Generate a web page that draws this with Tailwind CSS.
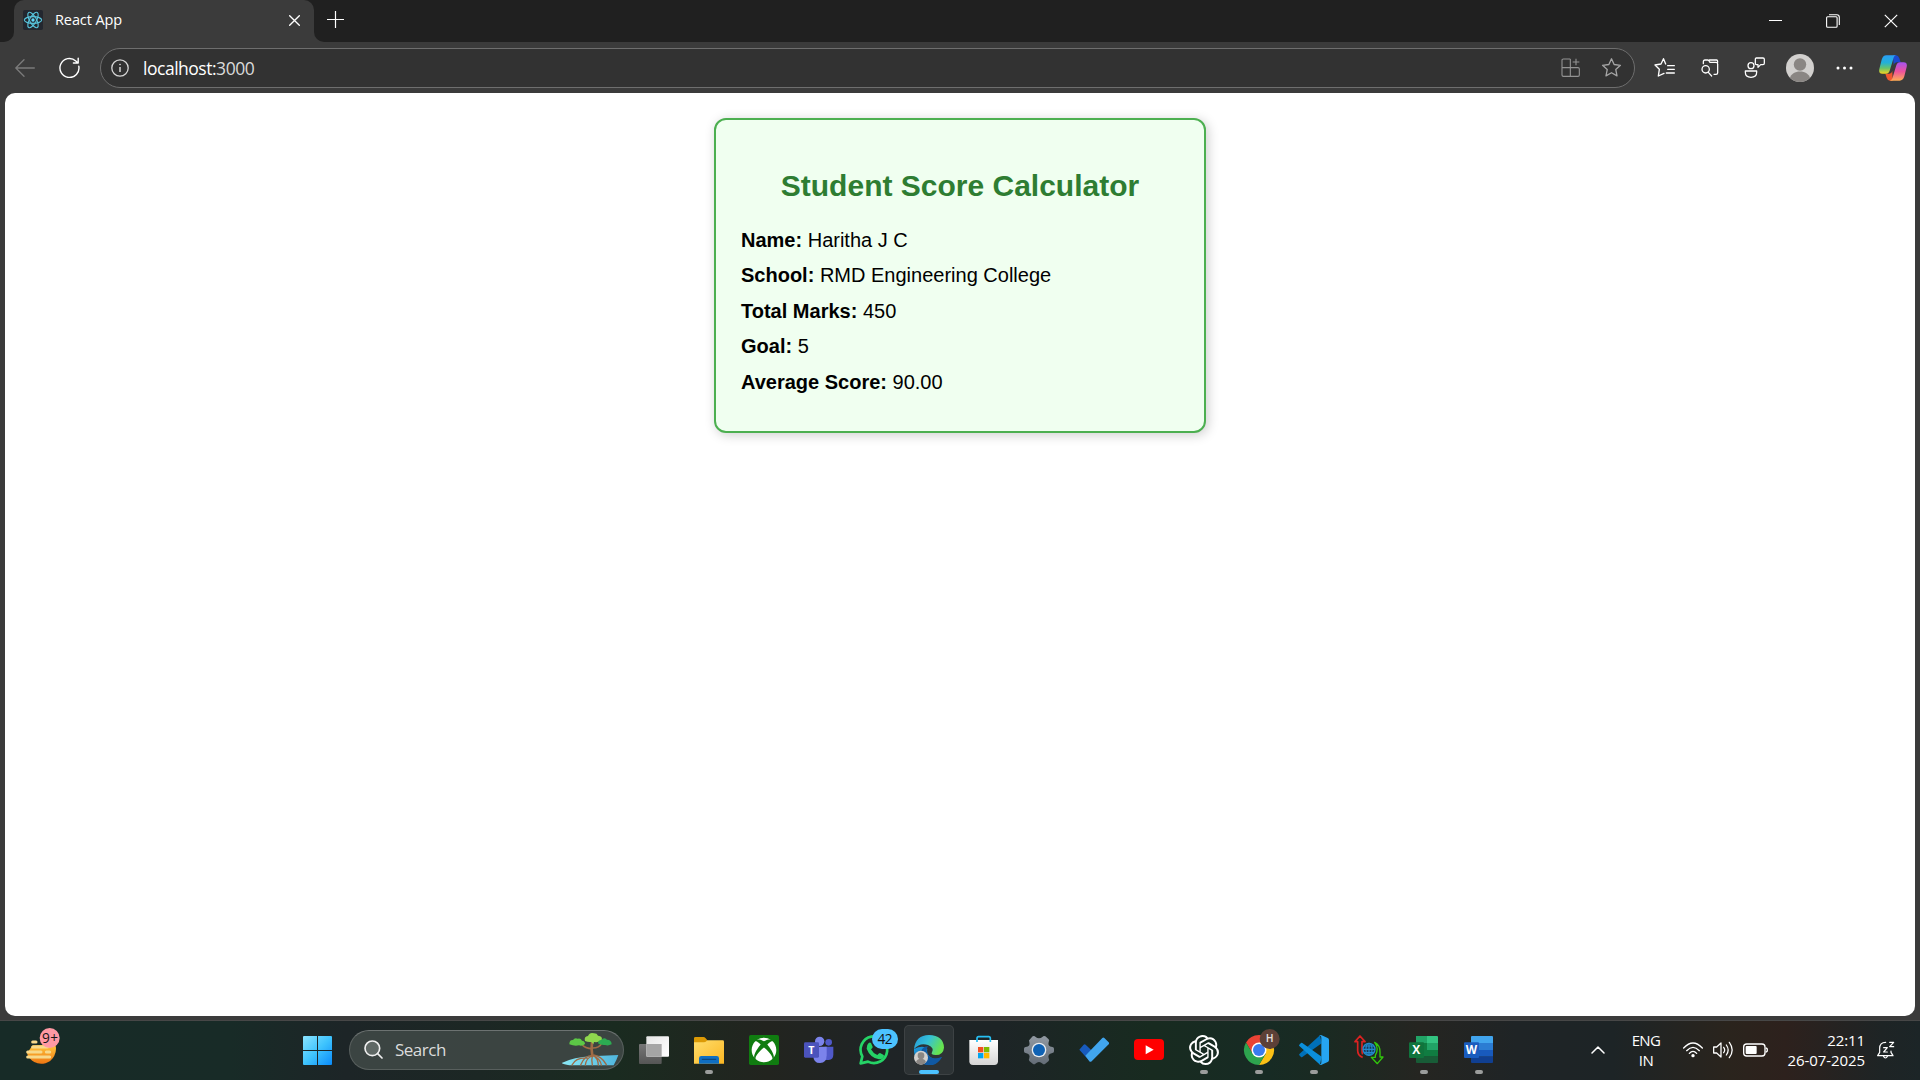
<!DOCTYPE html>
<html lang="en">
<head>
<meta charset="utf-8">
<title>React App</title>
<script src="https://cdn.jsdelivr.net/npm/@tailwindcss/browser@4"></script>
</head>
<body class="flex h-screen w-screen flex-col overflow-hidden bg-[#3b3b3b] font-['Open_Sans','Noto_Sans',sans-serif] text-white">

<!-- Tab strip -->
<header class="flex h-[42px] shrink-0 bg-[#3b3b3b]">
  <div class="w-[14px] rounded-br-[10px] bg-[#202020]"></div>
  <div class="w-[300px] bg-[#202020]">
    <div class="flex h-full items-center rounded-t-[10px] bg-[#3b3b3b] pb-[3px] pl-[9px]">
      <svg class="size-5 shrink-0" viewBox="0 0 60 60" fill="none">
        <rect width="60" height="60" rx="5" fill="#23272f"/>
        <g stroke="#58c4dc" stroke-width="3.4"><ellipse cx="30" cy="30" rx="26" ry="10"/><ellipse cx="30" cy="30" rx="26" ry="10" transform="rotate(60 30 30)"/><ellipse cx="30" cy="30" rx="26" ry="10" transform="rotate(120 30 30)"/></g>
        <circle cx="30" cy="30" r="5" fill="#61dafb"/>
      </svg>
      <span class="ml-3 w-[234px] text-[14.5px] leading-5 tracking-[-0.1px]">React App</span>
      <svg class="mt-[2px] size-[11px] shrink-0" viewBox="0 0 33 33" stroke="#fff" stroke-width="4" stroke-linecap="round"><path d="M2 2 31 31M31 2 2 31"/></svg>
    </div>
  </div>
  <div class="flex grow items-center rounded-bl-[10px] bg-[#202020]">
    <svg class="mb-[3px] ml-[13px] size-[17px]" viewBox="0 0 17 17" stroke="#fff" stroke-width="1.2"><path d="M8.5 0v17M0 8.5h17"/></svg>
    <div class="ml-auto flex h-full items-center">
      <div class="flex w-[58px] justify-center"><svg class="size-[13px]" viewBox="0 0 13 13" stroke="#fff"><path d="M0 5.5h13"/></svg></div>
      <div class="flex w-[58px] justify-center"><svg class="size-[14px]" viewBox="0 0 14 14" fill="none" stroke="#fff" stroke-width="1.1"><rect x=".6" y="2.8" width="10.5" height="10.5" rx="1"/><path d="M3 .7h7.800Q13.300.7 13.300 3.200V11"/></svg></div>
      <div class="flex w-[58px] justify-center"><svg class="size-[14px]" viewBox="0 0 14 14" stroke="#fff" stroke-width="1.2"><path d="M.8.8 13.200 13.200M13.200.8.8 13.200"/></svg></div>
    </div>
  </div>
</header>

<!-- Toolbar -->
<nav class="flex h-[51px] shrink-0 items-center pl-[2px]">
  <div class="flex w-[45px] justify-center"><svg class="h-[18px] w-5" viewBox="0 0 20 18" fill="none" stroke="#7b7b7b" stroke-width="1.3" stroke-linecap="round" stroke-linejoin="round"><path d="M19.300 9H.8M9 .8.8 9l8.200 8.200"/></svg></div>
  <div class="flex w-[45px] justify-center"><svg class="h-[21px] w-[21px]" viewBox="0 0 21 21" fill="none" stroke="#fff" stroke-width="1.4" stroke-linecap="round" stroke-linejoin="round"><path d="M19.800 9.200A9.500 9.500 0 1 1 16.800 3.900L19 6M19.200 1.200V6h-4.800"/></svg></div>
  <div class="ml-[8px] flex h-10 w-[1535px] items-center rounded-full border border-[#6e6e6e] bg-[#323232] pl-[10px]">
    <svg class="size-[18px]" viewBox="0 0 18 18" fill="none" stroke="#d6d6d6" stroke-width="1.300"><circle cx="9" cy="9" r="8.200"/><path d="M9 8v5" stroke-width="1.500"/><circle cx="9" cy="5.500" r=".5" fill="#d6d6d6" stroke-width=".8"/></svg>
    <span class="ml-[14px] text-[17.5px] leading-6 tracking-[-0.48px]">localhost:<span class="text-[#dadada]">3000</span></span>
    <svg class="ml-auto size-[19px]" viewBox="0 0 57 57" fill="none" stroke="#939393" stroke-width="3.300" stroke-linejoin="round"><path d="M28 3H7Q3 3 3 7v44q0 4 4 4h44q4 0 4-4V33q0-4-4-4H3M28 3v52M45 2v20M35 12h20"/></svg>
    <svg class="ml-[21px] mr-[12px] size-[21px]" viewBox="0 0 24 24" fill="none" stroke="#a5a5a5" stroke-width="1.500" stroke-linejoin="round"><path d="m12 2 3 6.600 7.200.9-5.300 4.900 1.400 7.100L12 18l-6.300 3.500 1.400-7.100L1.800 9.500 9 8.600z"/></svg>
  </div>
  <div class="ml-[7px] flex w-[45px] justify-center"><svg class="size-[21px]" viewBox="0 0 63 63" fill="none" stroke="#fff" stroke-width="4" stroke-linejoin="round" stroke-linecap="round"><path d="M35 21 28.500 5 21 21 3 24 16 37 13 57 30 49M41 26h20M41 37h20M37 48h24"/></svg></div>
  <div class="flex w-[45px] justify-center"><svg class="size-[18px]" viewBox="0 0 54 54" fill="none" stroke="#fff" stroke-width="3.800" stroke-linecap="round"><path d="M7 14V8q0-5 5-5h8q3 0 5 4l2 3h18q5 0 5 5v26q0 5-5 5h-6M25 3h22q3 0 3 7"/><circle cx="14" cy="31" r="11"/><path d="m22 40 10 11"/></svg></div>
  <div class="flex w-[45px] justify-center"><svg class="size-[21px]" viewBox="0 0 63 63" fill="none" stroke="#fff" stroke-width="3.800" stroke-linejoin="round"><circle cx="21" cy="26" r="9"/><path d="M4 42h34v4q0 15-17 15T4 46zM37 3h20q4 0 4 4v12q0 4-4 4H50l-8 8v-8h-5q-3 0-3-4V7q0-4 3-4z"/></svg></div>
  <div class="flex w-[45px] justify-center"><svg class="size-7 rounded-full bg-[#d2d0ce]" viewBox="0 0 28 28" fill="#8a8683"><circle cx="14" cy="10.500" r="6.200"/><path d="M4 24c1-4 5-6.500 10-6.500S23 20 24 24l-3 4H7z"/></svg></div>
  <div class="flex w-[45px] justify-center"><svg class="h-1 w-[17px]" viewBox="0 0 17 4" fill="#fff"><circle cx="2" cy="2" r="1.500"/><circle cx="8.500" cy="2" r="1.500"/><circle cx="15" cy="2" r="1.500"/></svg></div>
  <div class="flex w-[51px] justify-center"><svg class="h-[26px] w-7" viewBox="0 0 84 78">
    <defs>
      <linearGradient id="ca" x1="0" y1="0" x2="0" y2="1"><stop offset="0" stop-color="#2a9df4"/><stop offset=".4" stop-color="#22b0d8"/><stop offset=".7" stop-color="#67c36b"/><stop offset="1" stop-color="#f2d321"/></linearGradient>
      <linearGradient id="cb" x1="0" y1="0" x2="0" y2="1"><stop offset="0" stop-color="#a653f0"/><stop offset=".5" stop-color="#ee529c"/><stop offset="1" stop-color="#ffad55"/></linearGradient>
    </defs>
    <path d="M42 1h9q7 0 10 9l4 12H53q-7 0-9 8z" fill="#1b49cf"/>
    <path d="M41 77h-8q-7 0-10-9l-4-12h12q7 0 9-8z" fill="#f0572f"/>
    <path d="M22 1h30q-6 0-9 10L32 47q-3 9-11 9H10Q-2 56 1 42L8 14Q12 1 22 1z" fill="url(#ca)"/>
    <path d="M62 77H32q6 0 9-10l11-36q3-9 11-9h11q12 0 9 14l-7 28q-4 13-14 13z" fill="url(#cb)"/>
  </svg></div>
</nav>

<!-- Web page -->
<main class="mx-[5px] h-[923px] shrink-0 rounded-[10px] bg-white pt-[25px] font-['Liberation_Sans',Arial,sans-serif] text-black">
  <section class="mx-auto h-[315px] w-[492px] rounded-[12px] border-2 border-[#4caf50] bg-[#f0fff0] p-[25px] shadow-[2px_2px_12px_rgba(0,0,0,0.2)]">
    <h2 class="mt-[24px] mb-[26px] text-center text-[30px] leading-[34px] font-bold text-[#2e7d32]">Student Score Calculator</h2>
    <div class="flex flex-col gap-[12.4px] text-[20px] leading-[23px]">
      <p><strong>Name:</strong> Haritha J C</p>
      <p><strong>School:</strong> RMD Engineering College</p>
      <p><strong>Total Marks:</strong> 450</p>
      <p><strong>Goal:</strong> 5</p>
      <p><strong>Average Score:</strong> 90.00</p>
    </div>
  </section>
</main>

<!-- Taskbar -->
<footer class="mt-[4px] flex h-[60px] shrink-0 items-center border-t border-[#474747] bg-[linear-gradient(90deg,#172b27_0%,#182b27_12%,#1d2527_18%,#1c2724_25%,#1a2b20_32%,#22241f_40%,#1f2426_46%,#1d2426_52%,#182b20_60%,#172b24_66%,#1a2a22_69%,#252521_74%,#1f2426_79%,#1d2426_84%,#2a241d_90%,#2d211d_93%,#1e2425_98%,#1c2527_100%)] pb-[2px]">
  <div class="flex w-[290px] pb-[7px] pl-[26px]">
    <svg class="h-9 w-[34px]" viewBox="0 0 102 108">
      <defs><linearGradient id="sun" x1="0" y1="0" x2="0" y2="1"><stop offset="0" stop-color="#ffc83d"/><stop offset="1" stop-color="#ee7612"/></linearGradient></defs>
      <path d="M3 76A43 43 0 0 0 88 50L20 52z" fill="url(#sun)"/>
      <g stroke="#f7d98b" stroke-width="9" stroke-linecap="round"><path d="M20 42h10M20 57h44M5 72h40M61 72h10M5 87h66" /></g>
      <circle cx="71" cy="30" r="30" fill="#ff99a4"/>
      <text x="72" y="45" text-anchor="middle" font-family="Open Sans" font-size="41" fill="#151515" textLength="48">9+</text>
    </svg>
  </div>
  <div class="flex w-[55px] justify-center pt-px">
    <svg class="size-[29px]" viewBox="0 0 87 87"><defs><linearGradient id="win" gradientUnits="userSpaceOnUse" x1="0" y1="0" x2="87" y2="87"><stop stop-color="#8be4ff"/><stop offset=".5" stop-color="#3fc4fd"/><stop offset="1" stop-color="#0a8bfa"/></linearGradient></defs><path fill="url(#win)" d="M3 0h39v42H0V3q0-3 3-3zM45 0h39q3 0 3 3v39H45zM0 45h42v42H3q-3 0-3-3zM45 45h42v39q0 3-3 3H45z"/></svg>
  </div>
  <div class="ml-1 mr-[2.5px] flex h-10 w-[275px] items-center rounded-full border border-white/15 border-t-white/25 bg-[#3d4643]/95 pl-[14px]">
    <svg class="size-[19px]" viewBox="0 0 57 57" fill="none" stroke="#f0f0f0" stroke-width="5" stroke-linecap="round"><circle cx="25" cy="25" r="22" fill="#5f6865"/><path d="m41 41 13 13"/></svg>
    <span class="ml-3 text-[17px] leading-6 tracking-[-0.5px] text-[#dcdcdc]">Search</span>
    <svg class="mb-px ml-auto mr-[4px] h-[34px] w-[58px]" viewBox="0 0 174 102">
      <defs><linearGradient id="sea" x1="0" x2="1"><stop stop-color="#8be8f5"/><stop offset="1" stop-color="#4fb5dc"/></linearGradient></defs>
      <path d="M2 93Q40 75 90 73l82-4q-5 15-14 31H25Q8 97 2 93z" fill="url(#sea)"/>
      <g fill="none" stroke="#a06b45" stroke-linecap="round"><path d="M93 32q-3 20 1 40" stroke-width="8"/><path d="M94 50Q72 50 62 36M95 48q20 0 27-14" stroke-width="5"/><path d="M94 70Q70 70 59 99M92 72Q75 80 73 99M94 72q-3 10 0 27M96 70q15 8 16 29M98 69q25 4 38 29M78 78Q45 76 33 99M104 75q14 8 17 24" stroke-width="4"/></g>
      <path d="M25 37q0-14 11-13 5-8 14-4 9-3 13 6 9 1 9 10-8 7-18 4-12 4-29-3z" fill="#5cc746"/>
      <path d="M72 27q-4-13 9-15 5-12 18-8 9 0 12 7 15 1 11 14-8 7-23 5l-2 7-6-7q-11 1-19-3z" fill="#8fd74e"/>
      <path d="M111 34q1-10 10-10 7-10 17-1 14 0 14 14-10 5-20 2-14 1-21-5z" fill="#2cab52"/>
    </svg>
  </div>

  <div class="flex h-full items-center">
    <!-- Task view -->
    <div class="flex w-[55px] justify-center"><svg class="size-[30px]" viewBox="0 0 90 90"><defs><linearGradient id="tv" x2="1" y2="1"><stop stop-color="#e6e6e6"/><stop offset="1" stop-color="#fff"/></linearGradient><linearGradient id="tw" x2="0" y2="1"><stop stop-color="#777"/><stop offset="1" stop-color="#555"/></linearGradient></defs><rect y="27" width="68" height="60" rx="3" fill="url(#tw)"/><rect x="22" y="4" width="68" height="61" rx="3" fill="url(#tv)"/><path d="M22 27h46v38H25q-3 0-3-3z" fill="#a5a5a5"/></svg></div>
    <!-- File Explorer -->
    <div class="relative flex w-[55px] justify-center"><svg class="size-[30px]" viewBox="0 0 90 90"><defs><linearGradient id="fo" x2="1" y2="1"><stop stop-color="#ffdd6b"/><stop offset="1" stop-color="#fbb723"/></linearGradient></defs><path d="M0 10q0-4 4-4h24q4 0 7 4l5 6v20H0z" fill="#dc9a05"/><path d="M0 22h30q4 0 7-3l3-3h46q4 0 4 4v66H0z" fill="url(#fo)"/><path d="M15 86V70q0-7 7-7h46q7 0 7 7v16z" fill="#0f6fc2"/><path d="M25 73h40" stroke="#0b4880" stroke-width="4" stroke-linecap="round"/></svg><i class="absolute top-[35px] h-1 w-2 rounded-full bg-[#9b9d9c]"></i></div>
    <!-- Xbox -->
    <div class="flex w-[55px] justify-center"><svg class="size-[30px]" viewBox="0 0 90 90"><rect width="90" height="90" rx="5" fill="#107c10"/><path transform="translate(8 8) scale(3.08)" fill="#fff" d="M4.102 21.033C6.211 22.881 8.977 24 12 24c3.026 0 5.789-1.119 7.902-2.967 1.877-1.912-4.316-8.709-7.902-11.417-3.582 2.708-9.779 9.505-7.898 11.417zm11.16-14.406c2.5 2.961 7.484 10.313 6.076 12.912C23.002 17.48 24 14.861 24 12.004c0-3.34-1.365-6.362-3.57-8.536 0 0-.027-.022-.082-.042-.063-.022-.152-.045-.281-.045-.592 0-1.985.434-4.805 3.246zM3.654 3.426c-.057.02-.082.041-.086.042C1.365 5.642 0 8.664 0 12.004c0 2.854.998 5.473 2.661 7.533-1.401-2.605 3.579-9.951 6.08-12.91-2.82-2.813-4.216-3.245-4.806-3.245-.131 0-.223.021-.281.046v-.002zM12 3.551S9.055 1.828 6.755 1.746c-.903-.033-1.454.295-1.521.339C7.379.646 9.659 0 11.984 0H12c2.334 0 4.605.646 6.766 2.085-.068-.046-.615-.372-1.52-.339C14.946 1.828 12 3.545 12 3.545v.006z"/></svg></div>
    <!-- Teams -->
    <div class="flex w-[55px] justify-center"><svg class="size-[30px]" viewBox="0 0 90 90"><circle cx="74" cy="22" r="10" fill="#5059c9"/><path d="M62 35h26v24q0 14-14 16H62z" fill="#5059c9"/><circle cx="47" cy="19" r="14" fill="#7b83eb"/><path d="M30 35h38v26q0 23-20 23T28 62z" fill="#7b83eb"/><rect y="22" width="45" height="46" rx="4" fill="#4b53bc"/><text x="22" y="56" text-anchor="middle" font-family="Open Sans" font-size="32" font-weight="700" fill="#fff">T</text></svg></div>
    <!-- WhatsApp -->
    <div class="flex w-[55px] justify-center"><svg class="size-[30px] overflow-visible" viewBox="0 0 90 90"><path d="M5 85 10 64A40 40 0 1 1 27 80z" fill="none" stroke="#25d366" stroke-width="8" stroke-linejoin="round"/><path d="M29 24q4-3 7 0l5 11q1 3-5 8 6 12 19 17 5-6 8-6l10 5q4 2 1 7-4 8-14 7-27-5-37-32-1-11 6-17z" fill="#25d366"/><rect x="39" y="-18" width="78" height="60" rx="30" fill="#4cc2ff"/><text x="78" y="26" text-anchor="middle" font-family="Open Sans" font-size="41" fill="#111" textLength="45">42</text></svg></div>
    <!-- Edge -->
    <div class="relative flex h-[50px] w-[55px] items-center justify-center"><span class="absolute inset-x-[2.5px] inset-y-0 rounded-[5px] border border-white/8 bg-white/7"></span>
      <svg class="relative size-[30px]" viewBox="0 0 90 90"><defs><linearGradient id="eg" x2="1" y2=".4"><stop stop-color="#2496d8"/><stop offset=".5" stop-color="#35c1d8"/><stop offset="1" stop-color="#66e34f"/></linearGradient><linearGradient id="eb" x2="1" y2="1"><stop stop-color="#1b9de2"/><stop offset="1" stop-color="#114a8b"/></linearGradient></defs>
      <path d="M0 42Q-2 80 30 88 65 96 84 66q-14 8-29 3Q36 60 40 42 28 28 0 42z" fill="url(#eb)"/><path d="M18 60q4-26 24-26-8 10-2 22 10 22 44 10Q66 98 36 89 17 80 18 60z" fill="#1059a3"/><path d="M0 42Q5 0 45 0q44 2 45 38-2 22-25 22-16 0-11-8Q62 38 42 30 18 22 0 42z" fill="url(#eg)"/><circle cx="21" cy="68" r="21" fill="#d2d0ce"/><circle cx="21" cy="62" r="10" fill="#8a8683"/><path d="M6 82q2-11 15-11t15 11q-6 7-15 7T6 82z" fill="#8a8683"/></svg>
      <i class="absolute bottom-px h-1 w-5 rounded-full bg-[#4cc2ff]"></i></div>
    <!-- Store -->
    <div class="flex w-[55px] justify-center"><svg class="size-[30px]" viewBox="0 0 90 90"><defs><linearGradient id="st" x2="0" y2="1"><stop stop-color="#fff"/><stop offset="1" stop-color="#d5d5d5"/></linearGradient></defs><path d="M1 15h86v64q0 11-11 11H12Q1 90 1 79z" fill="url(#st)"/><path d="M24 21V10q0-5 5-5h30q5 0 5 5v11" fill="none" stroke="#27bff3" stroke-width="5"/><path fill="#f25022" d="M27 36h16v16H27z"/><path fill="#7fba00" d="M45 36h16v16H45z"/><path fill="#00a4ef" d="M27 54h16v16H27z"/><path fill="#ffb900" d="M45 54h16v16H45z"/></svg></div>
    <!-- Settings -->
    <div class="flex w-[55px] justify-center"><svg class="size-[30px]" viewBox="0 0 90 90"><defs><linearGradient id="ge" x2="0" y2="1"><stop stop-color="#929aa3"/><stop offset="1" stop-color="#646d77"/></linearGradient></defs><path d="M18 13 26 4q5-3 8 1 11 9 22 0 3-4 8-1l10 9q3 3 0 8-4 14 11 15 5 0 5 5v8q0 5-5 5-15 3-11 16 3 4 0 8l-10 8q-5 3-8 0-11-10-22 0-3 3-8 0l-10-8q-3-4 0-8 4-13-11-16-5 0-5-5v-8q0-5 5-5 15-1 11-15-3-5 2-8z" fill="url(#ge)"/><circle cx="45" cy="45" r="22" fill="#e8edf2"/><circle cx="45" cy="45" r="18" fill="#0f62b4"/></svg></div>
    <!-- To Do -->
    <div class="flex w-[55px] justify-center"><svg class="size-[30px]" viewBox="0 0 90 90"><path d="M1 44 14 29q3-3 6 0l26 25-14 25z" fill="#185abd"/><path d="M19 62 70 9q3-3 6 0l13 13q3 3 0 6L38 79q-4 3-7 0z" fill="#41a5ee"/></svg></div>
    <!-- YouTube -->
    <div class="flex w-[55px] justify-center"><svg class="size-[30px]" viewBox="0 0 90 90"><rect y="12" width="90" height="63" rx="12" fill="#f00"/><path d="M35 31v27l24-13.500z" fill="#fff"/></svg></div>
    <!-- ChatGPT -->
    <div class="relative flex w-[55px] justify-center"><svg class="size-[30px]" viewBox="0 0 24 24" fill="#fff"><path d="M22.2819 9.8211a5.9847 5.9847 0 0 0-.5157-4.9108 6.0462 6.0462 0 0 0-6.5098-2.9A6.0651 6.0651 0 0 0 4.9807 4.1818a5.9847 5.9847 0 0 0-3.9977 2.9 6.0462 6.0462 0 0 0 .7427 7.0966 5.98 5.98 0 0 0 .511 4.9107 6.051 6.051 0 0 0 6.5146 2.9001A5.9847 5.9847 0 0 0 13.2599 24a6.0557 6.0557 0 0 0 5.7718-4.2058 5.9894 5.9894 0 0 0 3.9977-2.9001 6.0557 6.0557 0 0 0-.7475-7.0729zm-9.022 12.6081a4.4755 4.4755 0 0 1-2.8764-1.0408l.1419-.0804 4.7783-2.7582a.7948.7948 0 0 0 .3927-.6813v-6.7369l2.02 1.1686a.071.071 0 0 1 .038.052v5.5826a4.504 4.504 0 0 1-4.4945 4.4944zm-9.6607-4.1254a4.4708 4.4708 0 0 1-.5346-3.0137l.142.0852 4.783 2.7582a.7712.7712 0 0 0 .7806 0l5.8428-3.3685v2.3324a.0804.0804 0 0 1-.0332.0615L9.74 19.9502a4.4992 4.4992 0 0 1-6.1408-1.6464zM2.3408 7.8956a4.485 4.485 0 0 1 2.3655-1.9728V11.6a.7664.7664 0 0 0 .3879.6765l5.8144 3.3543-2.0201 1.1685a.0757.0757 0 0 1-.071 0l-4.8303-2.7865A4.504 4.504 0 0 1 2.3408 7.872zm16.5963 3.8558L13.1038 8.364 15.1192 7.2a.0757.0757 0 0 1 .071 0l4.8303 2.7913a4.4944 4.4944 0 0 1-.6765 8.1042v-5.6772a.79.79 0 0 0-.407-.667zm2.0107-3.0231l-.142-.0852-4.7735-2.7818a.7759.7759 0 0 0-.7854 0L9.409 9.2297V6.8974a.0662.0662 0 0 1 .0284-.0615l4.8303-2.7866a4.4992 4.4992 0 0 1 6.6802 4.66zM8.3065 12.863l-2.02-1.1638a.0804.0804 0 0 1-.038-.0567V6.0742a4.4992 4.4992 0 0 1 7.3757-3.4537l-.142.0805L8.704 5.459a.7948.7948 0 0 0-.3927.6813zm1.0976-2.3654l2.602-1.4998 2.6069 1.4998v2.9994l-2.5974 1.4997-2.6067-1.4997Z"/></svg><i class="absolute top-[35px] h-1 w-2 rounded-full bg-[#9b9d9c]"></i></div>
    <!-- Chrome -->
    <div class="relative flex w-[55px] justify-center"><svg class="size-[30px] overflow-visible" viewBox="0 0 90 90"><path d="M45 45 6 22.500A45 45 0 0 1 84 22.500z" fill="#ea4335"/><path d="M45 22.500h39A45 45 0 0 1 45 90l20-34z" fill="#fbc116"/><path d="M6 22.500 26 56 45 45V22.500z" fill="#ea4335"/><path d="M6 22.500 26 56l19 12 20-12L45 90A45 45 0 0 1 6 22.500z" fill="#2da44e"/><circle cx="45" cy="45" r="22.500" fill="#fff"/><circle cx="45" cy="45" r="18" fill="#3a7bf0"/><circle cx="77" cy="12" r="30" fill="#5d4037"/><text x="77" y="22" text-anchor="middle" font-family="Roboto" font-size="31" font-weight="500" fill="#e5dedb">H</text></svg><i class="absolute top-[35px] h-1 w-2 rounded-full bg-[#9b9d9c]"></i></div>
    <!-- VS Code -->
    <div class="relative flex w-[55px] justify-center"><svg class="size-[30px]" viewBox="0 0 90 90"><path d="M2 56 63 1l5 24L10 66q-2 2-4 0l-5-5q-2-3 1-5z" fill="#0070b8"/><path d="M2 34 63 89l5-24L10 24q-2-2-4 0l-5 5q-2 3 1 5z" fill="#0b8fdb"/><path d="M68 1 86 9q4 2 4 6v60q0 4-4 6l-18 8q-4 2-7-2 6 3 6-5V8q0-8-6-5 3-4 7-2z" fill="#26a5f2"/></svg><i class="absolute top-[35px] h-1 w-2 rounded-full bg-[#9b9d9c]"></i></div>
    <!-- Network tool -->
    <div class="flex w-[55px] justify-center"><svg class="size-[30px]" viewBox="0 0 90 90" fill="none" stroke-width="5" stroke-linejoin="round"><path d="M26 67Q10 62 11 44V20H3L18 3l15 17h-9v26q0 8 2 12" stroke="#dc2222"/><path d="M62 22q17 9 16 30v14h9L70 86 52 67h12V61q12-20-2-39z" stroke="#32c80c" stroke-width="4"/><circle cx="45" cy="43" r="18" fill="#123a5c" stroke="#2389cc" stroke-width="4"/><g stroke="#2389cc" stroke-width="3.500"><ellipse cx="45" cy="43" rx="9" ry="18"/><path d="M45 25v36M27 43h36M30 33h30M30 53h30"/></g></svg></div>
    <!-- Excel -->
    <div class="relative flex w-[55px] justify-center"><svg class="size-[30px]" viewBox="0 0 90 90"><path d="M21 3h33v21H21z" fill="#21a366"/><path d="M54 3h30q3 0 3 3v18H54z" fill="#33c481"/><path d="M21 24h33v21H21z" fill="#107c41"/><path d="M54 24h33v21H54z" fill="#21a366"/><path d="M21 45h66v20H21z" fill="#107c41"/><path d="M21 65h66v16q0 3-3 3H24q-3 0-3-3z" fill="#185c37"/><rect y="22" width="45" height="47" rx="3" fill="#10743d"/><text x="22" y="57" text-anchor="middle" font-family="Open Sans" font-size="36" font-weight="700" fill="#fff">X</text></svg><i class="absolute top-[35px] h-1 w-2 rounded-full bg-[#9b9d9c]"></i></div>
    <!-- Word -->
    <div class="relative flex w-[55px] justify-center"><svg class="size-[30px]" viewBox="0 0 90 90"><path d="M24 3h60q3 0 3 3v18H21V6q0-3 3-3z" fill="#41a5ee"/><path d="M21 24h66v21H21z" fill="#2b7cd3"/><path d="M21 45h66v20H21z" fill="#185abd"/><path d="M21 65h66v16q0 3-3 3H24q-3 0-3-3z" fill="#103f91"/><rect y="22" width="45" height="47" rx="3" fill="#1a5cbe"/><text x="22" y="57" text-anchor="middle" font-family="Open Sans" font-size="36" font-weight="700" fill="#fff" textLength="34" lengthAdjust="spacingAndGlyphs">W</text></svg><i class="absolute top-[35px] h-1 w-2 rounded-full bg-[#9b9d9c]"></i></div>
  </div>

  <!-- System tray -->
  <div class="ml-auto flex items-center pr-[25px] text-[15px] leading-5 tracking-[-0.6px]">
    <svg class="h-2 w-[14px]" viewBox="0 0 14 8" fill="none" stroke="#fff" stroke-width="1.500" stroke-linecap="round" stroke-linejoin="round"><path d="m1 7 6-6 6 6"/></svg>
    <div class="ml-[21px] flex w-10 flex-col items-center"><span>ENG</span><span>IN</span></div>
    <svg class="ml-[17px] h-4 w-5" viewBox="0 0 60 48" fill="none" stroke="#fff" stroke-width="4" stroke-linecap="round"><path d="M2 18Q30-12 58 18M11 26q19-20 38 0M19 34q11-12 22 0"/><circle cx="30" cy="41" r="5" fill="#fff" stroke="none"/></svg>
    <svg class="ml-[10px] h-[18px] w-5" viewBox="0 0 60 54" fill="none" stroke="#fff" stroke-width="3.800" stroke-linecap="round" stroke-linejoin="round"><path d="M2 18h9L24 6v42L11 36H2zM32 19q6 8 0 16M40 12q11 15 0 30M49 4q17 23 0 46"/></svg>
    <svg class="ml-[10px] h-[14px] w-[25px]" viewBox="0 0 75 42" fill="none" stroke="#fff" stroke-width="4"><rect x="2" y="3" width="64" height="36" rx="9"/><rect x="8" y="9" width="33" height="24" rx="3" fill="#fff" stroke="none"/><path d="M68 15q5 0 5 6t-5 6"/></svg>
    <div class="ml-[19px] flex w-[78px] flex-col items-end whitespace-nowrap tracking-[-0.08px]"><span>22:11</span><span>26-07-2025</span></div>
    <svg class="ml-[12px] h-[18px] w-[18px]" viewBox="0 0 54 54" fill="none" stroke="#fff" stroke-width="3.600" stroke-linecap="round" stroke-linejoin="round"><path d="M26 4Q8 4 8 22v12L2 44h46l-6-10v-4M19 45q6 12 13 0M20 20h11L20 33h11M38 4h12L38 17h12"/></svg>
  </div>
</footer>
</body>
</html>
